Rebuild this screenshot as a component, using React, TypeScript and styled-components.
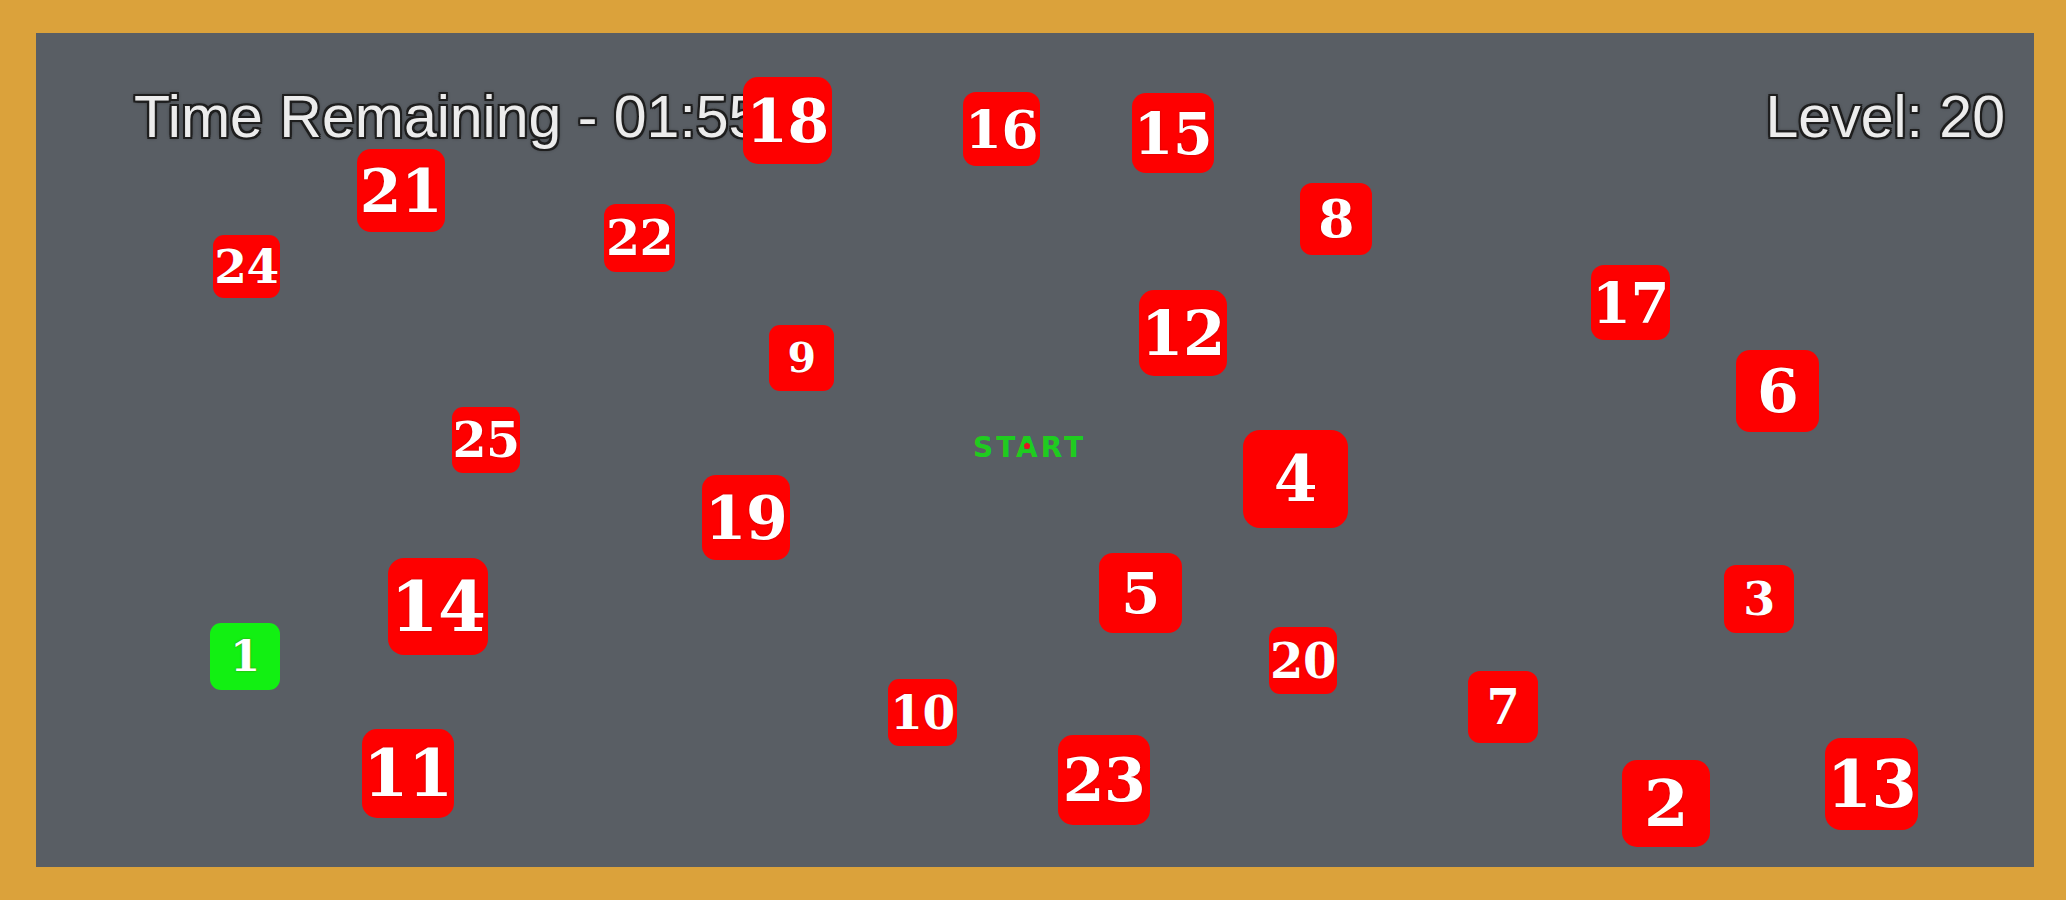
import React from 'react';
import styled, {createGlobalStyle} from 'styled-components';

// Tiles placed on the board (coordinates relative to the board).
interface TileData {
  n: number;
  x: number;
  y: number;
  w: number;
  h: number;
  f: number;
  done?: boolean;
}

const tiles: TileData[] = [
  {n: 18, x: 707, y: 44, w: 89, h: 87, f: 60},
  {n: 16, x: 927, y: 59, w: 77, h: 74, f: 53},
  {n: 15, x: 1096, y: 60, w: 82, h: 80, f: 57},
  {n: 21, x: 321, y: 116, w: 88, h: 83, f: 60},
  {n: 8, x: 1264, y: 150, w: 72, h: 72, f: 52},
  {n: 22, x: 568, y: 171, w: 71, h: 68, f: 49},
  {n: 24, x: 177, y: 202, w: 67, h: 63, f: 47},
  {n: 17, x: 1555, y: 232, w: 79, h: 75, f: 56},
  {n: 12, x: 1103, y: 257, w: 88, h: 86, f: 61},
  {n: 9, x: 733, y: 292, w: 65, h: 66, f: 41},
  {n: 6, x: 1700, y: 317, w: 83, h: 82, f: 60},
  {n: 25, x: 416, y: 374, w: 68, h: 66, f: 49},
  {n: 4, x: 1207, y: 397, w: 105, h: 98, f: 63},
  {n: 19, x: 666, y: 442, w: 88, h: 85, f: 60},
  {n: 14, x: 352, y: 525, w: 100, h: 97, f: 69},
  {n: 5, x: 1063, y: 520, w: 83, h: 80, f: 56},
  {n: 3, x: 1688, y: 532, w: 70, h: 68, f: 46},
  {n: 1, x: 174, y: 590, w: 70, h: 67, f: 43, done: true},
  {n: 20, x: 1233, y: 594, w: 68, h: 67, f: 48},
  {n: 10, x: 852, y: 646, w: 69, h: 67, f: 47},
  {n: 7, x: 1432, y: 638, w: 70, h: 72, f: 48},
  {n: 11, x: 326, y: 696, w: 92, h: 89, f: 65},
  {n: 23, x: 1022, y: 702, w: 92, h: 90, f: 60},
  {n: 2, x: 1586, y: 727, w: 88, h: 87, f: 64},
  {n: 13, x: 1789, y: 705, w: 93, h: 92, f: 65},
];

const GlobalStyle = createGlobalStyle`
  html, body {
    margin: 0;
    padding: 0;
    background: #dba23b;
  }
`;

export default function App() {
  return (
    <>
      <GlobalStyle />
      <StyledFrame>
        <StyledBoard>
          <StyledHud>
            <StyledHudText>Time Remaining - 01:55</StyledHudText>
            <StyledHudText>Level: 20</StyledHudText>
          </StyledHud>

          <StyledStart>
            ST
            <StyledStartA>
              A<StyledDot />
            </StyledStartA>
            RT
          </StyledStart>

          {tiles.map((t) => (
            <StyledTile
              key={t.n}
              $x={t.x}
              $y={t.y}
              $w={t.w}
              $h={t.h}
              $f={t.f}
              $done={t.done}>
              {t.n}
            </StyledTile>
          ))}
        </StyledBoard>
      </StyledFrame>
    </>
  );
}

const StyledFrame = styled.div`
  width: 2066px;
  height: 900px;
  box-sizing: border-box;
  padding: 33px 32px 33px 36px;
  background: #dba23b;
`;

const StyledBoard = styled.div`
  position: relative;
  height: 100%;
  background: #595e64;
  overflow: hidden;
`;

const StyledHud = styled.div`
  display: flex;
  justify-content: space-between;
  align-items: flex-start;
  padding: 54px 29px 0 98px;
`;

const StyledHudText = styled.div`
  font-family: 'Liberation Sans', Arial, sans-serif;
  font-size: 59px;
  line-height: 60px;
  color: #ececec;
  white-space: nowrap;
  text-shadow:
    -2px -2px 0 #1e1e1e,
    2px -2px 0 #1e1e1e,
    -2px 2px 0 #1e1e1e,
    2px 2px 0 #1e1e1e,
    0 2px 0 #1e1e1e,
    0 -2px 0 #1e1e1e,
    2px 0 0 #1e1e1e,
    -2px 0 0 #1e1e1e,
    0 0 4px #000;
`;

const StyledStart = styled.div`
  position: absolute;
  left: 937px;
  top: 401px;
  font-family: 'DejaVu Sans', sans-serif;
  font-weight: bold;
  font-size: 28px;
  line-height: 1;
  letter-spacing: 3px;
  color: #1fcc1f;
`;

const StyledStartA = styled.span`
  position: relative;
`;

const StyledDot = styled.span`
  position: absolute;
  left: 8px;
  top: 12px;
  width: 6px;
  height: 6px;
  border-radius: 50%;
  background: #e8141e;
`;

const StyledTile = styled.div<{
  $x: number;
  $y: number;
  $w: number;
  $h: number;
  $f: number;
  $done?: boolean;
}>`
  position: absolute;
  left: ${(p) => p.$x}px;
  top: ${(p) => p.$y}px;
  width: ${(p) => p.$w}px;
  height: ${(p) => p.$h}px;
  display: flex;
  align-items: center;
  justify-content: center;
  border-radius: ${(p) => Math.round(p.$h * 0.17)}px;
  background: ${(p) => (p.$done ? '#12f012' : '#fe0000')};
  color: #ffffff;
  font-family: 'DejaVu Serif', 'Liberation Serif', serif;
  font-weight: bold;
  font-size: ${(p) => p.$f}px;
  line-height: 1;
  letter-spacing: -0.5px;
  text-shadow: 0 0 2px rgba(120, 0, 0, 0.5);
`;
